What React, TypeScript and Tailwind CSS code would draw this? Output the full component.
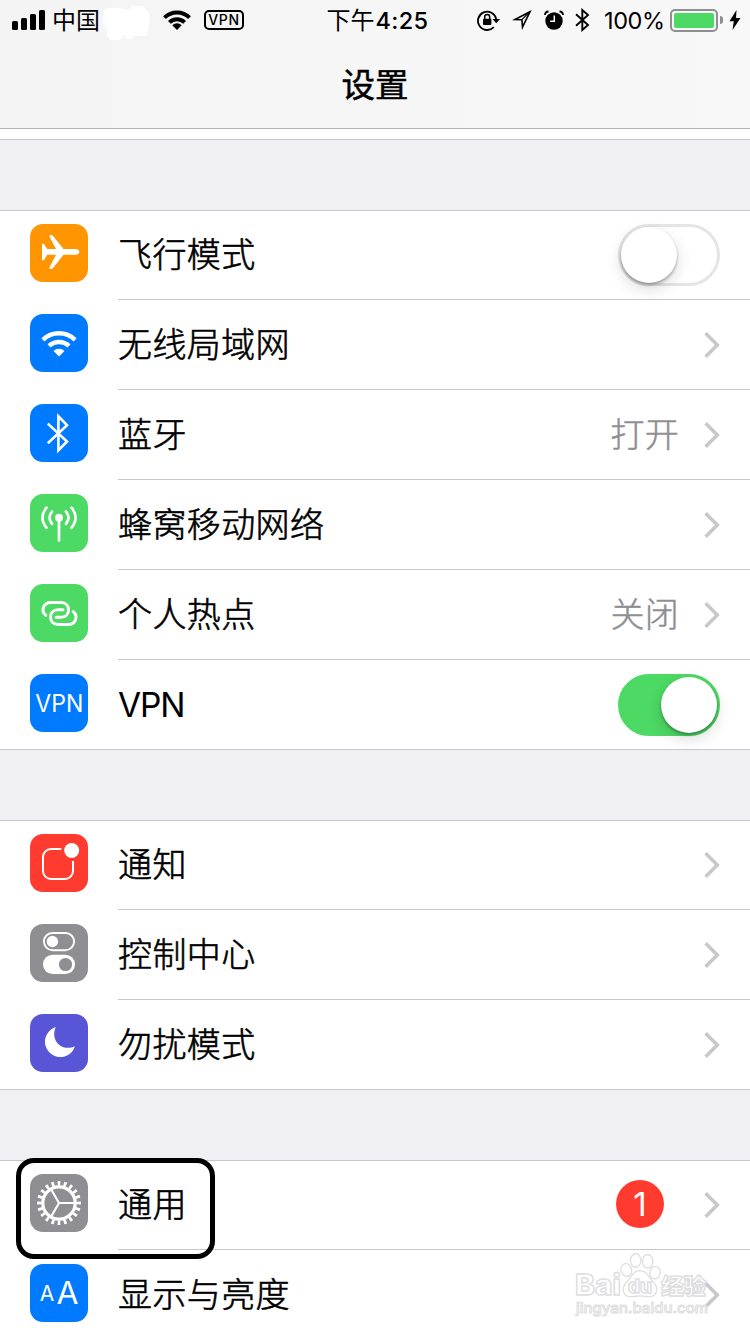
import React from 'react'
import clsx from 'clsx'

interface SettingItem {
  label: string
  icon: React.ReactNode
  color: string
  value?: string
  badge?: number
  toggle?: 'on' | 'off'
  highlighted?: boolean
}

const PlaneIcon = () => (
  <path
    d="M12 19.7h1.2q.6 0 1 .6l3 4.7H26L19.4 12.5q-.5-1.300.8-1.500h1.200q.9 0 1.500.8L33.600 25H46c1.800 0 3.400 1.400 3.400 2.900S47.800 30.700 46 30.700H33.600L22.900 44.200q-.6.8-1.500.8H20.200q-1.300-.2-.8-1.500L26 30.700h-8.800l-3 5q-.4.6-1 .6H12z"
    fill="#fff"
  />
)

const WifiIcon = () => (
  <>
    <path d="M12.900 25.800A23.200 23.200 0 0 1 45.100 25.800M19 31.900A14.700 14.700 0 0 1 39 31.900" fill="none" stroke="#fff" strokeWidth="4.400" />
    <path d="M23.500 37A7.800 7.800 0 0 1 34.500 37L29 42.500z" fill="#fff" />
  </>
)

const BluetoothIcon = () => (
  <path d="M17.800 19.600 37 37.500 28.400 46.300V12.300L37 21.200 17.800 39.200" fill="none" stroke="#fff" strokeWidth="2.600" />
)

const CellularIcon = () => (
  <>
    <circle cx="29" cy="23.700" r="3.900" fill="#fff" />
    <path
      d="M29 24v22.500M22 17.500q-5 6.200 0 12.400M36 17.500q5 6.200 0 12.400M16.500 13.700q-8.200 10 0 20M41.500 13.700q8.200 10 0 20"
      fill="none"
      stroke="#fff"
      strokeWidth="2.700"
      strokeLinecap="round"
    />
  </>
)

const HotspotIcon = () => (
  <path
    d="M15.800 31.300C10.500 27 13 18.500 21 18.500H31C41 18.500 41 33.300 31 33.300H26M43.200 27.700C48.500 32 46 40.500 38 40.500H28C18 40.500 18 25.700 28 25.700H33"
    fill="none"
    stroke="#fff"
    strokeWidth="3"
    strokeLinecap="round"
  />
)

const VpnIcon = () => (
  <text x="5.300" y="38" textLength="48" fontSize="24.500" lengthAdjust="spacingAndGlyphs" fill="#fff">
    VPN
  </text>
)

const NotificationIcon = () => (
  <>
    <path d="M31.300 15H21a8 8 0 0 0-8 8v14a8 8 0 0 0 8 8h14a8 8 0 0 0 8-8V27" fill="none" stroke="#fff" strokeWidth="2" />
    <circle cx="41.700" cy="16.500" r="7.500" fill="#fff" />
  </>
)

const ControlCenterIcon = () => (
  <>
    <rect x="13.900" y="9" width="30.200" height="17.200" rx="8.600" fill="none" stroke="#fff" strokeWidth="1.900" />
    <circle cx="22.400" cy="17.500" r="5.700" fill="#fff" />
    <rect x="13" y="30.800" width="32" height="19.200" rx="9.600" fill="#fff" />
    <circle cx="35.500" cy="40.500" r="6.600" fill="#8e8e93" />
  </>
)

const MoonIcon = () => (
  <path d="M25.700 13A15.400 15.400 0 1 0 45 32.300C32 38 20 27 25.700 13z" fill="#fff" />
)

const GearIcon = () => (
  <g fill="none" stroke="#fff">
    <circle cx="29" cy="29" r="16.200" strokeWidth="3.200" />
    <circle cx="29" cy="29" r="19.600" strokeWidth="4.800" pathLength="100" strokeDasharray="2.200 2.800" strokeDashoffset="1.100" />
    <path d="M29 29h15M29 29l-7.500-13M29 29l-7.500 13" strokeWidth="2.200" />
  </g>
)

const DisplayIcon = () => (
  <>
    <text x="9.800" y="37.300" textLength="14.500" lengthAdjust="spacingAndGlyphs" fontSize="21" fill="#fff">
      A
    </text>
    <text x="26.500" y="40.200" textLength="22" lengthAdjust="spacingAndGlyphs" fontSize="31" fill="#fff">
      A
    </text>
  </>
)

const groups: SettingItem[][] = [
  [
    { label: '飞行模式', icon: <PlaneIcon />, color: 'bg-[#ff9500]', toggle: 'off' },
    { label: '无线局域网', icon: <WifiIcon />, color: 'bg-[#007aff]' },
    { label: '蓝牙', icon: <BluetoothIcon />, color: 'bg-[#007aff]', value: '打开' },
    { label: '蜂窝移动网络', icon: <CellularIcon />, color: 'bg-[#4cd964]' },
    { label: '个人热点', icon: <HotspotIcon />, color: 'bg-[#4cd964]', value: '关闭' },
    { label: 'VPN', icon: <VpnIcon />, color: 'bg-[#007aff]', toggle: 'on' },
  ],
  [
    { label: '通知', icon: <NotificationIcon />, color: 'bg-[#ff3b30]' },
    { label: '控制中心', icon: <ControlCenterIcon />, color: 'bg-[#8e8e93]' },
    { label: '勿扰模式', icon: <MoonIcon />, color: 'bg-[#5856d6]' },
  ],
  [
    { label: '通用', icon: <GearIcon />, color: 'bg-[#8e8e93]', badge: 1, highlighted: true },
    { label: '显示与亮度', icon: <DisplayIcon />, color: 'bg-[#007aff]' },
  ],
]

function StatusBar() {
  return (
    <div className="grid h-10 grid-cols-[1fr_auto_1fr] items-center text-2xl leading-10">
      <div className="flex h-10 items-center pl-3">
        <svg width="33" height="20" viewBox="0 0 33 20">
          <rect y="11" width="6" height="9" rx="1.500" />
          <rect x="9" y="8" width="6" height="12" rx="1.500" />
          <rect x="18" y="4" width="6" height="16" rx="1.500" />
          <rect x="27" width="6" height="20" rx="1.500" />
        </svg>
        <span className="mt-[2px] ml-[7px] w-[50px] whitespace-nowrap">中国</span>
        {/* carrier name is painted over */}
        <svg className="mt-[6px]" width="48" height="34" viewBox="0 0 48 34">
          <path
            d="M2 4l4-2 14 0 5 2 3-1 2-3 11 0 3 4 3 3 1 6-2 10-1 6-5 1-7 0-3 3-6 0-2-5-3 5-2 1H8l-3-5 0-6-4-6z"
            fill="#fff"
          />
        </svg>
        <svg className="ml-[13px]" width="28" height="20" viewBox="0 0 28 20">
          <path d="M1.500 7.600A17.600 17.600 0 0 1 26.500 7.600M6.400 12.300A10.800 10.800 0 0 1 21.600 12.300" fill="none" stroke="#000" strokeWidth="4" />
          <path d="M9.300 15.300A6.700 6.700 0 0 1 18.700 15.300L14 20z" />
        </svg>
        <span className="ml-[13px] flex h-5 w-10 items-center justify-center rounded-[5px] border-2 border-black text-[14px] leading-none font-medium tracking-[0.6px]">
          VPN
        </span>
      </div>
      <div className="flex h-10 items-center pt-px pl-[6px]">
        <span>下午</span>
        <span className="ml-px w-[54px] text-[23.5px] font-medium tracking-[0.3px] whitespace-nowrap">4:25</span>
      </div>
      <div className="flex h-10 items-center justify-end pr-[9px]">
        <svg width="24" height="22" viewBox="0 0 24 22">
          <path d="M16.800 18.200A9.200 9.200 0 1 1 19.200 10" fill="none" stroke="#000" strokeWidth="1.800" />
          <path d="M15.500 10h7.500l-3.800 4.300z" />
          <rect x="6" y="9.700" width="8.400" height="6.300" rx="1" />
          <path d="M7.700 10V7.900a2.500 2.500 0 0 1 5 0V10" fill="none" stroke="#000" strokeWidth="1.500" />
        </svg>
        <svg className="ml-[11px]" width="20" height="20" viewBox="0 0 20 20">
          <path d="M3 9.500 18 1.700 10.500 17.200 9.900 9.800z" fill="none" stroke="#000" strokeWidth="1.600" />
          <path d="M18 1.500 9.900 9.700" stroke="#000" strokeWidth="1.200" />
        </svg>
        <svg className="ml-[12px]" width="20" height="20" viewBox="0 0 20 20">
          <circle cx="10" cy="11" r="8.700" />
          <path d="M1 5Q1 1.500 4.500 1.500M19 5q0-3.500-3.500-3.500" fill="none" stroke="#000" strokeWidth="1.900" />
          <path d="M10.300 5.500v5.800H6.200" fill="none" stroke="#fff" strokeWidth="1.500" />
        </svg>
        <svg className="ml-[11px]" width="15" height="24" viewBox="0 0 15 24">
          <path d="M1 6.300 13 17 7.300 22V2L13 7 1 17.700" fill="none" stroke="#000" strokeWidth="1.900" />
        </svg>
        <span className="mt-[2px] ml-[14px] w-[63px] text-[23.500px] tracking-[-0.4px] whitespace-nowrap">100%</span>
        <span className="ml-[3px] h-[23px] w-12 rounded-[5px] border-2 border-[#8e8e93] p-[2px]">
          <span className="block h-full rounded-[2px] bg-[#4cd964]" />
        </span>
        <span className="ml-[2px] h-2 w-[3px] rounded-r-full bg-[#8e8e93]" />
        <svg className="ml-[6px]" width="12" height="20" viewBox="0 0 12 20">
          <path d="M7.500 0 .5 11.200h4.300L3.500 20l8-12H7z" />
        </svg>
      </div>
    </div>
  )
}

function Toggle({ on }: { on: boolean }) {
  return (
    <div
      className={clsx(
        'mt-[14px] flex h-[62px] w-[102px] rounded-full border-3',
        on ? 'justify-end border-[#4cd964] bg-[#4cd964]' : 'border-[#e5e5e5] bg-white'
      )}
    >
      <div className="size-14 rounded-full bg-white shadow-[0_6px_16px_rgba(0,0,0,0.15),0_2px_3px_rgba(0,0,0,0.3)]" />
    </div>
  )
}

function Chevron() {
  return (
    <svg className="mt-[31px] ml-[24px]" width="17" height="28" viewBox="0 0 17 28">
      <path d="M2.600 2.300 14.300 14 2.600 25.700" fill="none" stroke="#c7c7cc" strokeWidth="3.500" />
    </svg>
  )
}

function Watermark() {
  return (
    <svg className="absolute top-0 right-9" width="142" height="72" viewBox="0 0 142 72">
      <g fill="#fff" fillOpacity="0.8" stroke="#dedee0" strokeWidth="1.300">
        <ellipse cx="63.700" cy="10.500" rx="5.200" ry="7" />
        <ellipse cx="75.700" cy="11.300" rx="5.200" ry="6.800" />
        <ellipse cx="54.300" cy="20" rx="5.300" ry="6.500" transform="rotate(-12 54.300 20)" />
        <ellipse cx="83" cy="22.700" rx="5.200" ry="6.300" transform="rotate(12 83 22.700)" />
        <path d="M68 20.700c7 0 8 6 12 10 8 7 5 16-3 16-4 0-6-.8-9-.8s-5 .8-9 .8c-9 0-10-9-4-15 5-5 6-11 13-11z" />
        <g fontWeight="800" strokeWidth="1.400">
          <text x="3" y="45" fontSize="29" textLength="46" lengthAdjust="spacingAndGlyphs">Bai</text>
          <text x="56" y="43" fontSize="19" textLength="24" lengthAdjust="spacingAndGlyphs">du</text>
          <text x="89" y="44" fontSize="22" textLength="45" lengthAdjust="spacingAndGlyphs">经验</text>
        </g>
        <text x="4" y="62.500" fontSize="14.500" fontWeight="500" textLength="132" lengthAdjust="spacingAndGlyphs" strokeWidth="1">
          jingyan.baidu.com
        </text>
      </g>
    </svg>
  )
}

function SettingRow({ item, last }: { item: SettingItem; last: boolean }) {
  return (
    <div className="relative flex h-[90px] pl-[30px]">
      <svg className={clsx('mt-[14px] size-[58px] shrink-0 rounded-[13px]', item.color)} viewBox="0 0 58 58">
        {item.icon}
      </svg>
      <div className={clsx('ml-[30px] flex flex-1 border-[#c8c7cc] pr-[30px]', !last && 'border-b')}>
        <span
          className={clsx(
            'flex-1 leading-[90px]',
            item.label === 'VPN'
              ? 'text-[33.5px] tracking-[-1.1px]'
              : 'text-[34px] font-light tracking-[0.4px] [-webkit-text-stroke:0.6px_black]'
          )}
        >
          {item.label}
        </span>
        {item.value && (
          <span className="text-[34px] leading-[90px] font-light tracking-[0.3px] text-[#8e8e93] [-webkit-text-stroke:0.5px_#8e8e93]">
            {item.value}
          </span>
        )}
        {item.badge && (
          <span className="mt-5 mr-[15px] size-12 rounded-full bg-[#ff3b30] text-center text-[33px] leading-12 text-white">
            {item.badge}
          </span>
        )}
        {item.toggle ? <Toggle on={item.toggle === 'on'} /> : <Chevron />}
      </div>
      {item.highlighted && (
        <div className="absolute -top-[2px] left-4 z-10 h-[101px] w-[199px] rounded-[18px] border-5 border-black" />
      )}
      {item.label === '显示与亮度' && <Watermark />}
    </div>
  )
}

export default function App() {
  return (
    <div className="h-[1334px] w-[750px] overflow-hidden bg-[#efeff4] font-['Inter','Noto_Sans_CJK_SC',sans-serif] text-black">
      <header className="h-[129px] border-b border-[#b2b2b2] bg-linear-to-r from-[#f4f4f4] to-[#f8f8f8]">
        <StatusBar />
        <h1 className="text-center text-[33.5px] leading-[90px] font-normal [-webkit-text-stroke:0.5px_black]">设置</h1>
      </header>
      <div className="h-[11px] border-b border-[#c8c7cc] bg-white" />

      {groups.map((group, index) => (
        <section key={index} className="mt-[70px] border-y border-[#c8c7cc] bg-white">
          <div className="-my-px">
            {group.map((item, i) => (
              <SettingRow key={item.label} item={item} last={i === group.length - 1} />
            ))}
          </div>
        </section>
      ))}
    </div>
  )
}
